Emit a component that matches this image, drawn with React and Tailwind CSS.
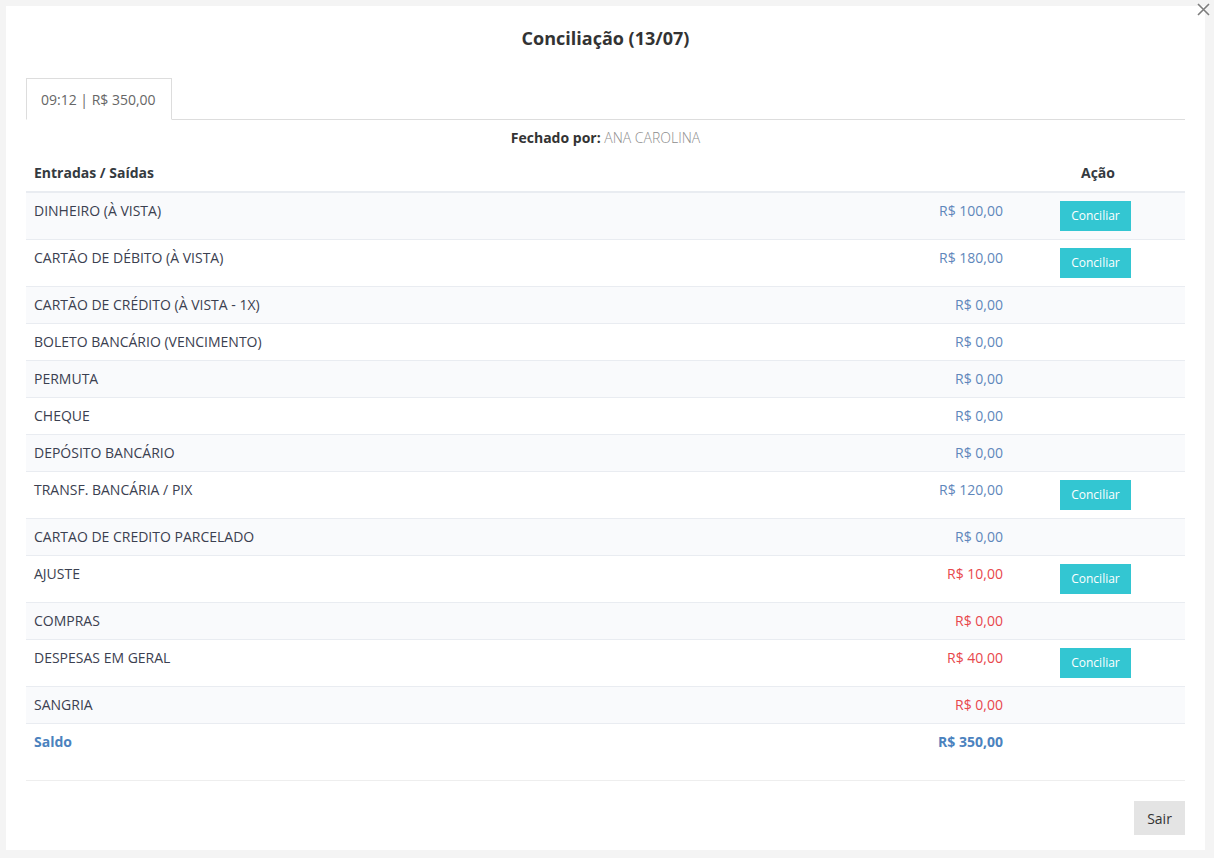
import React from "react";

const rows = [
  { nome: "DINHEIRO (À VISTA)", valor: "R$ 100,00", tipo: "in", acao: true },
  { nome: "CARTÃO DE DÉBITO (À VISTA)", valor: "R$ 180,00", tipo: "in", acao: true },
  { nome: "CARTÃO DE CRÉDITO (À VISTA - 1X)", valor: "R$ 0,00", tipo: "in" },
  { nome: "BOLETO BANCÁRIO (VENCIMENTO)", valor: "R$ 0,00", tipo: "in" },
  { nome: "PERMUTA", valor: "R$ 0,00", tipo: "in" },
  { nome: "CHEQUE", valor: "R$ 0,00", tipo: "in" },
  { nome: "DEPÓSITO BANCÁRIO", valor: "R$ 0,00", tipo: "in" },
  { nome: "TRANSF. BANCÁRIA / PIX", valor: "R$ 120,00", tipo: "in", acao: true },
  { nome: "CARTAO DE CREDITO PARCELADO", valor: "R$ 0,00", tipo: "in" },
  { nome: "AJUSTE", valor: "R$ 10,00", tipo: "out", acao: true },
  { nome: "COMPRAS", valor: "R$ 0,00", tipo: "out" },
  { nome: "DESPESAS EM GERAL", valor: "R$ 40,00", tipo: "out", acao: true },
  { nome: "SANGRIA", valor: "R$ 0,00", tipo: "out" },
];

export default function App() {
  return (
    <div
      className="relative w-full h-[858px] bg-[#f4f4f4] pt-[6px] pl-[6px] overflow-hidden"
      style={{ fontFamily: '"Open Sans", sans-serif' }}
    >
      {/* fechar */}
      <button className="absolute top-[3px] left-[1197px] text-[#7d7d7d]">
        <svg width="13" height="13" viewBox="0 0 13 13" stroke="currentColor" strokeWidth="1.6">
          <path d="M1 1 L12 12 M12 1 L1 12" />
        </svg>
      </button>

      <div className="w-[1199px] h-[844px] bg-white px-5 pt-5">
        <h2 className="text-center text-[18px] leading-6 font-bold text-[#333]">Conciliação (13/07)</h2>

        <div className="mt-[28px] flex border-b border-[#dddddd]">
          <div className="h-[42px] -mb-px pl-[14px] pr-[15px] flex items-center border border-[#dddddd] border-b-white bg-white text-[14px] text-[#666]">
            09:12 | R$ 350,00
          </div>
        </div>

        <p className="mt-[8px] text-center text-[14px] leading-5 text-[#333]">
          <span className="font-bold">Fechado por:</span>{" "}
          <span className="text-[#8c8c8c] font-light">ANA CAROLINA</span>
        </p>

        <div className="mt-[7px] text-[14px] leading-5 text-[#3b4050]">
          <div className="flex border-b-2 border-[#e9ecf1] font-bold text-[#343a40]">
            <div className="flex-1 px-2 py-2">Entradas / Saídas</div>
            <div className="w-[174px] px-2 py-2 text-center">Ação</div>
          </div>

          {rows.map((r, i) => (
            <div
              key={r.nome}
              className={
                "flex border-b border-[#e9ecf1] " + (i % 2 === 0 ? "bg-[#f9fafc]" : "bg-white")
              }
            >
              <div className="flex-1 px-2 py-2">{r.nome}</div>
              <div
                className={
                  "px-2 py-2 text-right " + (r.tipo === "in" ? "text-[#5f87bb]" : "text-[#e8474c]")
                }
              >
                {r.valor}
              </div>
              <div className="w-[174px] pl-[49px] py-2 flex">
                {r.acao ? (
                  <button className="w-[71px] h-[30px] bg-[#33c6d2] text-white text-[12px]">
                    Conciliar
                  </button>
                ) : null}
              </div>
            </div>
          ))}

          <div className="flex h-[57px] border-b border-[#eeeeee] font-bold text-[#4b82be]">
            <div className="flex-1 px-2 py-2">Saldo</div>
            <div className="px-2 py-2 text-right">R$ 350,00</div>
            <div className="w-[174px]" />
          </div>
        </div>

        <div className="mt-5 flex justify-end">
          <button className="w-[51px] h-[34px] bg-[#e4e4e4] text-[14px] text-[#333]">Sair</button>
        </div>
      </div>
    </div>
  );
}
